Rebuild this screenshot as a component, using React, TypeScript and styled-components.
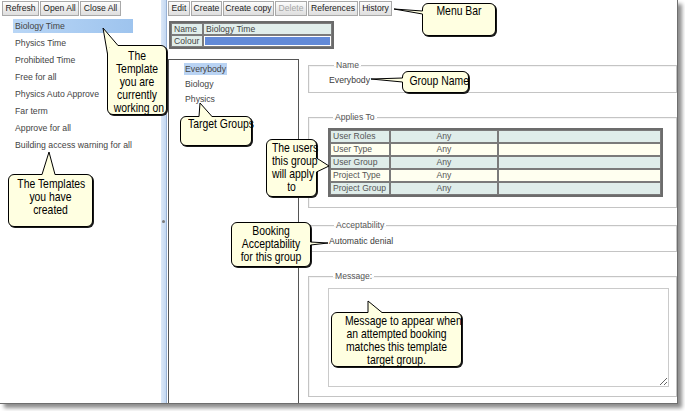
import React from 'react';
import styled, { createGlobalStyle } from 'styled-components';

const GlobalStyle = createGlobalStyle`
  html, body {
    margin: 0;
    padding: 0;
    background: #ffffff;
  }
  body {
    width: 685px;
    height: 411px;
    overflow: hidden;
    font-family: "Liberation Sans", Arial, sans-serif;
  }
`;

const Frame = styled.div`
  position: relative;
  display: flex;
  width: 677px;
  height: 403px;
  background: #ffffff;
  border-right: 1px solid #6e6e6e;
  border-bottom: 1px solid #6e6e6e;
  box-shadow: 4px 4px 4px rgba(0, 0, 0, 0.45);
`;

/* ---------- toolbars ---------- */

const Toolbar = styled.div<{ $pl: number }>`
  display: flex;
  gap: 1px;
  height: 17px;
  box-sizing: border-box;
  padding: 1px 0 0 ${(p) => p.$pl}px;
`;

const ToolButton = styled.button<{ $w: number; $off?: boolean }>`
  width: ${(p) => p.$w}px;
  height: 15px;
  box-sizing: border-box;
  padding: 0;
  margin: 0;
  border: 1px solid #a9a9a9;
  background: linear-gradient(#fdfdfd, #dedede);
  font-family: "Liberation Sans", Arial, sans-serif;
  font-size: 8.6px;
  line-height: 13px;
  color: ${(p) => (p.$off ? '#a6a6a6' : '#222222')};
  white-space: nowrap;
`;

/* ---------- left: templates ---------- */

const LeftPanel = styled.div`
  width: 161px;
  display: flex;
  flex-direction: column;
`;

const TemplateList = styled.div`
  display: flex;
  flex-direction: column;
  gap: 3px;
  padding: 2px 0 0 13px;
`;

const TemplateItem = styled.div<{ $active?: boolean }>`
  width: 120px;
  height: 14px;
  box-sizing: border-box;
  padding-left: 2px;
  font-size: 8.7px;
  line-height: 14px;
  color: #444444;
  white-space: nowrap;
  background: ${(p) => (p.$active ? 'linear-gradient(to right, #b9d6f6, #9ec4ee)' : 'transparent')};
`;

const Splitter = styled.div`
  position: relative;
  width: 6px;
  box-sizing: border-box;
  background: linear-gradient(to right, #dbe8f8, #c4d8f1);
  border-right: 1px solid #98b2d6;
`;

const Grip = styled.span`
  position: absolute;
  top: 220px;
  left: 1px;
  width: 3px;
  height: 3px;
  border-radius: 50%;
  background: #7a7a7a;
`;

/* ---------- right: editor ---------- */

const RightPanel = styled.div`
  flex: 1;
  display: flex;
  flex-direction: column;
  padding-left: 1px;
  min-width: 0;
`;

const InfoTable = styled.table`
  margin: 4px 0 0 1px;
  width: 165px;
  border-collapse: separate;
  border-spacing: 0;
  border: 2px solid #6a6a6a;
  font-size: 8.6px;
  color: #444444;
  td {
    height: 10px;
    padding: 0 2px;
    line-height: 10px;
    border: 1px solid #7c7c7c;
    background: #e1eeeb;
    white-space: nowrap;
  }
`;

const SwatchCell = styled.td`
  && {
    background: #628ad8;
    box-shadow: inset 0 0 0 1px #ffffff;
  }
`;

const ContentRow = styled.div`
  flex: 1;
  display: flex;
  margin-top: 10px;
`;

const TargetBox = styled.div`
  width: 131px;
  box-sizing: border-box;
  border: 1px solid #555555;
  border-bottom: none;
  padding: 2px 0 0 15px;
  display: flex;
  flex-direction: column;
  gap: 1px;
`;

const GroupItem = styled.div`
  height: 14px;
  font-size: 8.7px;
  line-height: 14px;
  color: #444444;
`;

const GroupLabel = styled.span<{ $active?: boolean }>`
  padding: 1px 1px;
  background: ${(p) => (p.$active ? '#b9d3f3' : 'transparent')};
`;

const Details = styled.div`
  flex: 1;
  display: flex;
  flex-direction: column;
  padding: 1px 0 0 9px;
`;

const Group = styled.fieldset<{ $mt: number; $pad: string }>`
  margin: ${(p) => p.$mt}px 0 0 0;
  padding: ${(p) => p.$pad};
  min-width: 0;
  border: 1px solid #c4c4c4;
  box-shadow: inset 1px 1px 0 #f4f4f4;
`;

const Legend = styled.legend`
  margin-left: 5px;
  padding: 0 2px;
  font-size: 8.6px;
  line-height: 10px;
  color: #555555;
`;

const FieldText = styled.div`
  height: 12px;
  font-size: 8.7px;
  line-height: 12px;
  color: #3c3c3c;
`;

const AppliesTable = styled.table`
  width: 335px;
  table-layout: fixed;
  border-collapse: separate;
  border-spacing: 0;
  border: 2px solid #6c6c6c;
  font-size: 8.6px;
  color: #555555;
  td {
    height: 11px;
    padding: 0 2px;
    line-height: 11px;
    border: 1px solid #7a7a7a;
    white-space: nowrap;
  }
`;

const AppliesRow = styled.tr<{ $alt: boolean }>`
  td {
    background: ${(p) => (p.$alt ? '#fffff0' : '#dfedea')};
  }
`;

const AnyCell = styled.td`
  text-align: center;
`;

const MessageBox = styled.textarea`
  display: block;
  width: 341px;
  height: 99px;
  box-sizing: border-box;
  margin: 0;
  border: 1px solid #cacaca;
  background: #ffffff;
  resize: both;
  outline: none;
`;

/* ---------- callouts ---------- */

type Pt = [number, number];

interface CalloutSpec {
  x: number;
  y: number;
  w: number;
  h: number;
  pt: number;
  lines: string[];
  stroke: Pt[];
  fill: Pt[];
}

const Bubble = styled.div<{ $x: number; $y: number; $w: number; $h: number; $pt: number }>`
  position: absolute;
  left: ${(p) => p.$x}px;
  top: ${(p) => p.$y}px;
  width: ${(p) => p.$w}px;
  height: ${(p) => p.$h}px;
  box-sizing: border-box;
  padding-top: ${(p) => p.$pt}px;
  border: 1px solid #000000;
  border-radius: 6px;
  background: #ffffe1;
  box-shadow: 1px 1px 0 #1a1a1a;
  font-family: "Liberation Sans", Arial, sans-serif;
  font-size: 13px;
  line-height: 13px;
  color: #000000;
  text-align: center;
  white-space: nowrap;
  z-index: 5;
`;

// the callouts use a narrow face; squeeze Liberation Sans to Arial Narrow widths
const BubbleLine = styled.div`
  transform: scaleX(0.8);
  transform-origin: 50% 50%;
`;

const Tail = styled.svg`
  position: absolute;
  left: -1px;
  top: -1px;
  overflow: visible;
  pointer-events: none;
`;

const pts = (list: Pt[]) => list.map((p) => p.join(',')).join(' ');

// edges of a tail, drawn over the bubble border so it opens into the box
const topTail = (a: number, b: number, tip: Pt) => ({
  stroke: [[a, 0.5], tip, [b, 0.5]] as Pt[],
  fill: [[a, 2.5], [a, 0.5], tip, [b, 0.5], [b, 2.5]] as Pt[],
});
const leftTail = (a: number, b: number, tip: Pt) => ({
  stroke: [[0.5, a], tip, [0.5, b]] as Pt[],
  fill: [[2.5, a], [0.5, a], tip, [0.5, b], [2.5, b]] as Pt[],
});
const rightTail = (w: number, a: number, b: number, tip: Pt) => ({
  stroke: [[w - 0.5, a], tip, [w - 0.5, b]] as Pt[],
  fill: [[w - 2.5, a], [w - 0.5, a], tip, [w - 0.5, b], [w - 2.5, b]] as Pt[],
});

const callouts: CalloutSpec[] = [
  {
    x: 107, y: 45, w: 60, h: 70, pt: 3,
    lines: ['The', 'Template', 'you are', 'currently', 'working on'],
    stroke: [[0.5, 9], [-4, -17], [11, 0.5]],
    fill: [[2.5, 9], [0.5, 9], [-4, -17], [11, 0.5], [11, 2.5], [2.5, 2.5]],
  },
  { x: 8, y: 174, w: 85, h: 53, pt: 2, lines: ['The Templates', 'you have', 'created'], ...topTail(34, 47, [41, -22]) },
  { x: 422, y: 3, w: 74, h: 33, pt: 0, lines: ['Menu Bar'], ...leftTail(8, 11, [-28, 6]) },
  { x: 402, y: 71, w: 67, h: 22, pt: 2, lines: ['Group Name'], ...leftTail(7, 11, [-31, 8]) },
  { x: 180, y: 116, w: 72, h: 30, pt: 0, lines: ['Target Groups'], ...topTail(19, 32, [20, -13]) },
  { x: 266, y: 139, w: 51, h: 58, pt: 1, lines: ['The users', 'this group', 'will apply', 'to'], ...rightTail(51, 19, 33, [63, 27]) },
  { x: 231, y: 222, w: 80, h: 45, pt: 1, lines: ['Booking', 'Acceptability', 'for this group'], ...rightTail(80, 20, 23, [97, 21]) },
  {
    x: 331, y: 312, w: 131, h: 55, pt: 1,
    lines: ['Message to appear when', 'an attempted booking', 'matches this template', 'target group.'],
    ...topTail(37, 51, [37, -11]),
  },
];

const Callout: React.FC<{ spec: CalloutSpec }> = ({ spec }) => (
  <Bubble $x={spec.x} $y={spec.y} $w={spec.w} $h={spec.h} $pt={spec.pt}>
    <Tail width={spec.w} height={spec.h}>
      <polygon points={pts(spec.fill)} fill="#ffffe1" />
      <polyline points={pts(spec.stroke)} fill="none" stroke="#000" strokeWidth={1} />
    </Tail>
    {spec.lines.map((l) => (
      <BubbleLine key={l}>{l}</BubbleLine>
    ))}
  </Bubble>
);

/* ---------- data ---------- */

const templates = [
  'Biology Time',
  'Physics Time',
  'Prohibited Time',
  'Free for all',
  'Physics Auto Approve',
  'Far term',
  'Approve for all',
  'Building access warning for all',
];

const groups = ['Everybody', 'Biology', 'Physics'];

const appliesRows = ['User Roles', 'User Type', 'User Group', 'Project Type', 'Project Group'];

const menuButtons: { label: string; w: number; off?: boolean }[] = [
  { label: 'Edit', w: 22 },
  { label: 'Create', w: 31 },
  { label: 'Create copy', w: 51 },
  { label: 'Delete', w: 32, off: true },
  { label: 'References', w: 50 },
  { label: 'History', w: 33 },
];

export default function App() {
  return (
    <>
      <GlobalStyle />
      <Frame>
        <LeftPanel>
          <Toolbar $pl={2}>
            <ToolButton $w={37}>Refresh</ToolButton>
            <ToolButton $w={39}>Open All</ToolButton>
            <ToolButton $w={41}>Close All</ToolButton>
          </Toolbar>
          <TemplateList>
            {templates.map((t, i) => (
              <TemplateItem key={t} $active={i === 0}>
                {t}
              </TemplateItem>
            ))}
          </TemplateList>
        </LeftPanel>

        <Splitter>
          <Grip />
        </Splitter>

        <RightPanel>
          <Toolbar $pl={0}>
            {menuButtons.map((b) => (
              <ToolButton key={b.label} $w={b.w} $off={b.off}>
                {b.label}
              </ToolButton>
            ))}
          </Toolbar>

          <InfoTable>
            <colgroup>
              <col style={{ width: 32 }} />
              <col />
            </colgroup>
            <tbody>
              <tr>
                <td>Name</td>
                <td>Biology Time</td>
              </tr>
              <tr>
                <td>Colour</td>
                <SwatchCell />
              </tr>
            </tbody>
          </InfoTable>

          <ContentRow>
            <TargetBox>
              {groups.map((g, i) => (
                <GroupItem key={g}>
                  <GroupLabel $active={i === 0}>{g}</GroupLabel>
                </GroupItem>
              ))}
            </TargetBox>

            <Details>
              <Group $mt={0} $pad="4px 0 6px 20px">
                <Legend>Name</Legend>
                <FieldText>Everybody</FieldText>
              </Group>

              <Group $mt={19} $pad="6px 0 10px 19px">
                <Legend>Applies To</Legend>
                <AppliesTable>
                  <colgroup>
                    <col style={{ width: 60 }} />
                    <col style={{ width: 108 }} />
                    <col />
                  </colgroup>
                  <tbody>
                    {appliesRows.map((r, i) => (
                      <AppliesRow key={r} $alt={i % 2 === 1}>
                        <td>{r}</td>
                        <AnyCell>Any</AnyCell>
                        <td />
                      </AppliesRow>
                    ))}
                  </tbody>
                </AppliesTable>
              </Group>

              <Group $mt={12} $pad="5px 0 4px 20px">
                <Legend>Acceptability</Legend>
                <FieldText>Automatic denial</FieldText>
              </Group>

              <Group $mt={19} $pad="7px 0 9px 19px">
                <Legend>Message:</Legend>
                <MessageBox />
              </Group>
            </Details>
          </ContentRow>
        </RightPanel>

        {callouts.map((c) => (
          <Callout key={c.lines.join(' ')} spec={c} />
        ))}
      </Frame>
    </>
  );
}
